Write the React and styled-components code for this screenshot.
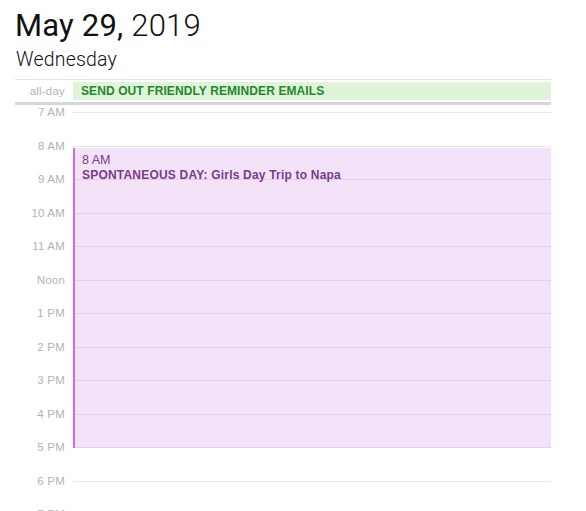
import React from "react";
import styled, { createGlobalStyle } from "styled-components";

const Global = createGlobalStyle`
  html, body { margin: 0; padding: 0; background: #ffffff; }
  body { font-family: "Liberation Sans", Arial, sans-serif; overflow: hidden; }
`;

const Page = styled.div`
  width: 586px;
  height: 511px;
  overflow: hidden;
  padding-left: 15px;
  box-sizing: border-box;
`;

const Title = styled.h1`
  margin: 7px 0 0 0;
  font-family: Roboto, "Liberation Sans", sans-serif;
  font-size: 31px;
  line-height: 37px;
  font-weight: 400;
  color: #111111;
  letter-spacing: 0.2px;
`;

const Year = styled.span`
  font-weight: 300;
`;

const Weekday = styled.div`
  margin: 5px 0 0 1px;
  font-family: Roboto, "Liberation Sans", sans-serif;
  font-size: 19.5px;
  line-height: 22px;
  font-weight: 300;
  color: #111111;
  letter-spacing: 0.2px;
`;

const Grid = styled.div`
  width: 536px;
  margin-top: 8px;
  border-top: 1px solid #e2e2e2;
`;

const AllDayRow = styled.div`
  display: grid;
  grid-template-columns: 58px 1fr;
  align-items: center;
  padding: 2px 0;
  border-bottom: 3px solid #d6d6d6;
`;

const SideLabel = styled.div`
  text-align: right;
  padding-right: 8px;
  font-size: 11.5px;
  line-height: 14px;
  color: #b3b3b3;
  letter-spacing: 0.2px;
`;

const AllDayEvent = styled.div`
  height: 18px;
  background: #dff5d9;
  padding-left: 8px;
  display: flex;
  align-items: center;
  font-size: 12px;
  font-weight: 700;
  color: #23882b;
  letter-spacing: 0.1px;
`;

const Timeline = styled.div`
  position: relative;
  padding-top: 7px;
`;

const HourRow = styled.div`
  display: grid;
  grid-template-columns: 58px 1fr;
  height: 33.5px;
`;

const HourLabel = styled(SideLabel)`
  margin-top: -7px;
  height: 14px;
`;

const HourLine = styled.div`
  border-top: 1px solid #e9e9e9;
`;

const Event = styled.div`
  position: absolute;
  left: 58px;
  right: 0;
  top: 43px;
  height: 300px;
  box-sizing: border-box;
  border-left: 2px solid #c86ee0;
  background: rgba(196, 110, 220, 0.2);
  padding: 5px 0 0 7px;
  color: #7a3a8c;
  font-size: 12px;
  line-height: 15px;
`;

const EventTime = styled.div`
  font-weight: 400;
  font-size: 12.5px;
`;

const EventTitle = styled.div`
  font-weight: 700;
  margin-top: 0;
  letter-spacing: 0.2px;
`;

const hours = [
  "7 AM", "8 AM", "9 AM", "10 AM", "11 AM", "Noon",
  "1 PM", "2 PM", "3 PM", "4 PM", "5 PM", "6 PM", "7 PM", "8 PM",
];

export default function App() {
  return (
    <>
      <Global />
      <Page>
        <Title>
          May 29, <Year>2019</Year>
        </Title>
        <Weekday>Wednesday</Weekday>
        <Grid>
          <AllDayRow>
            <SideLabel>all-day</SideLabel>
            <AllDayEvent>SEND OUT FRIENDLY REMINDER EMAILS</AllDayEvent>
          </AllDayRow>
          <Timeline>
            {hours.map((h) => (
              <HourRow key={h}>
                <HourLabel>{h}</HourLabel>
                <HourLine />
              </HourRow>
            ))}
            <Event>
              <EventTime>8 AM</EventTime>
              <EventTitle>SPONTANEOUS DAY: Girls Day Trip to Napa</EventTitle>
            </Event>
          </Timeline>
        </Grid>
      </Page>
    </>
  );
}
